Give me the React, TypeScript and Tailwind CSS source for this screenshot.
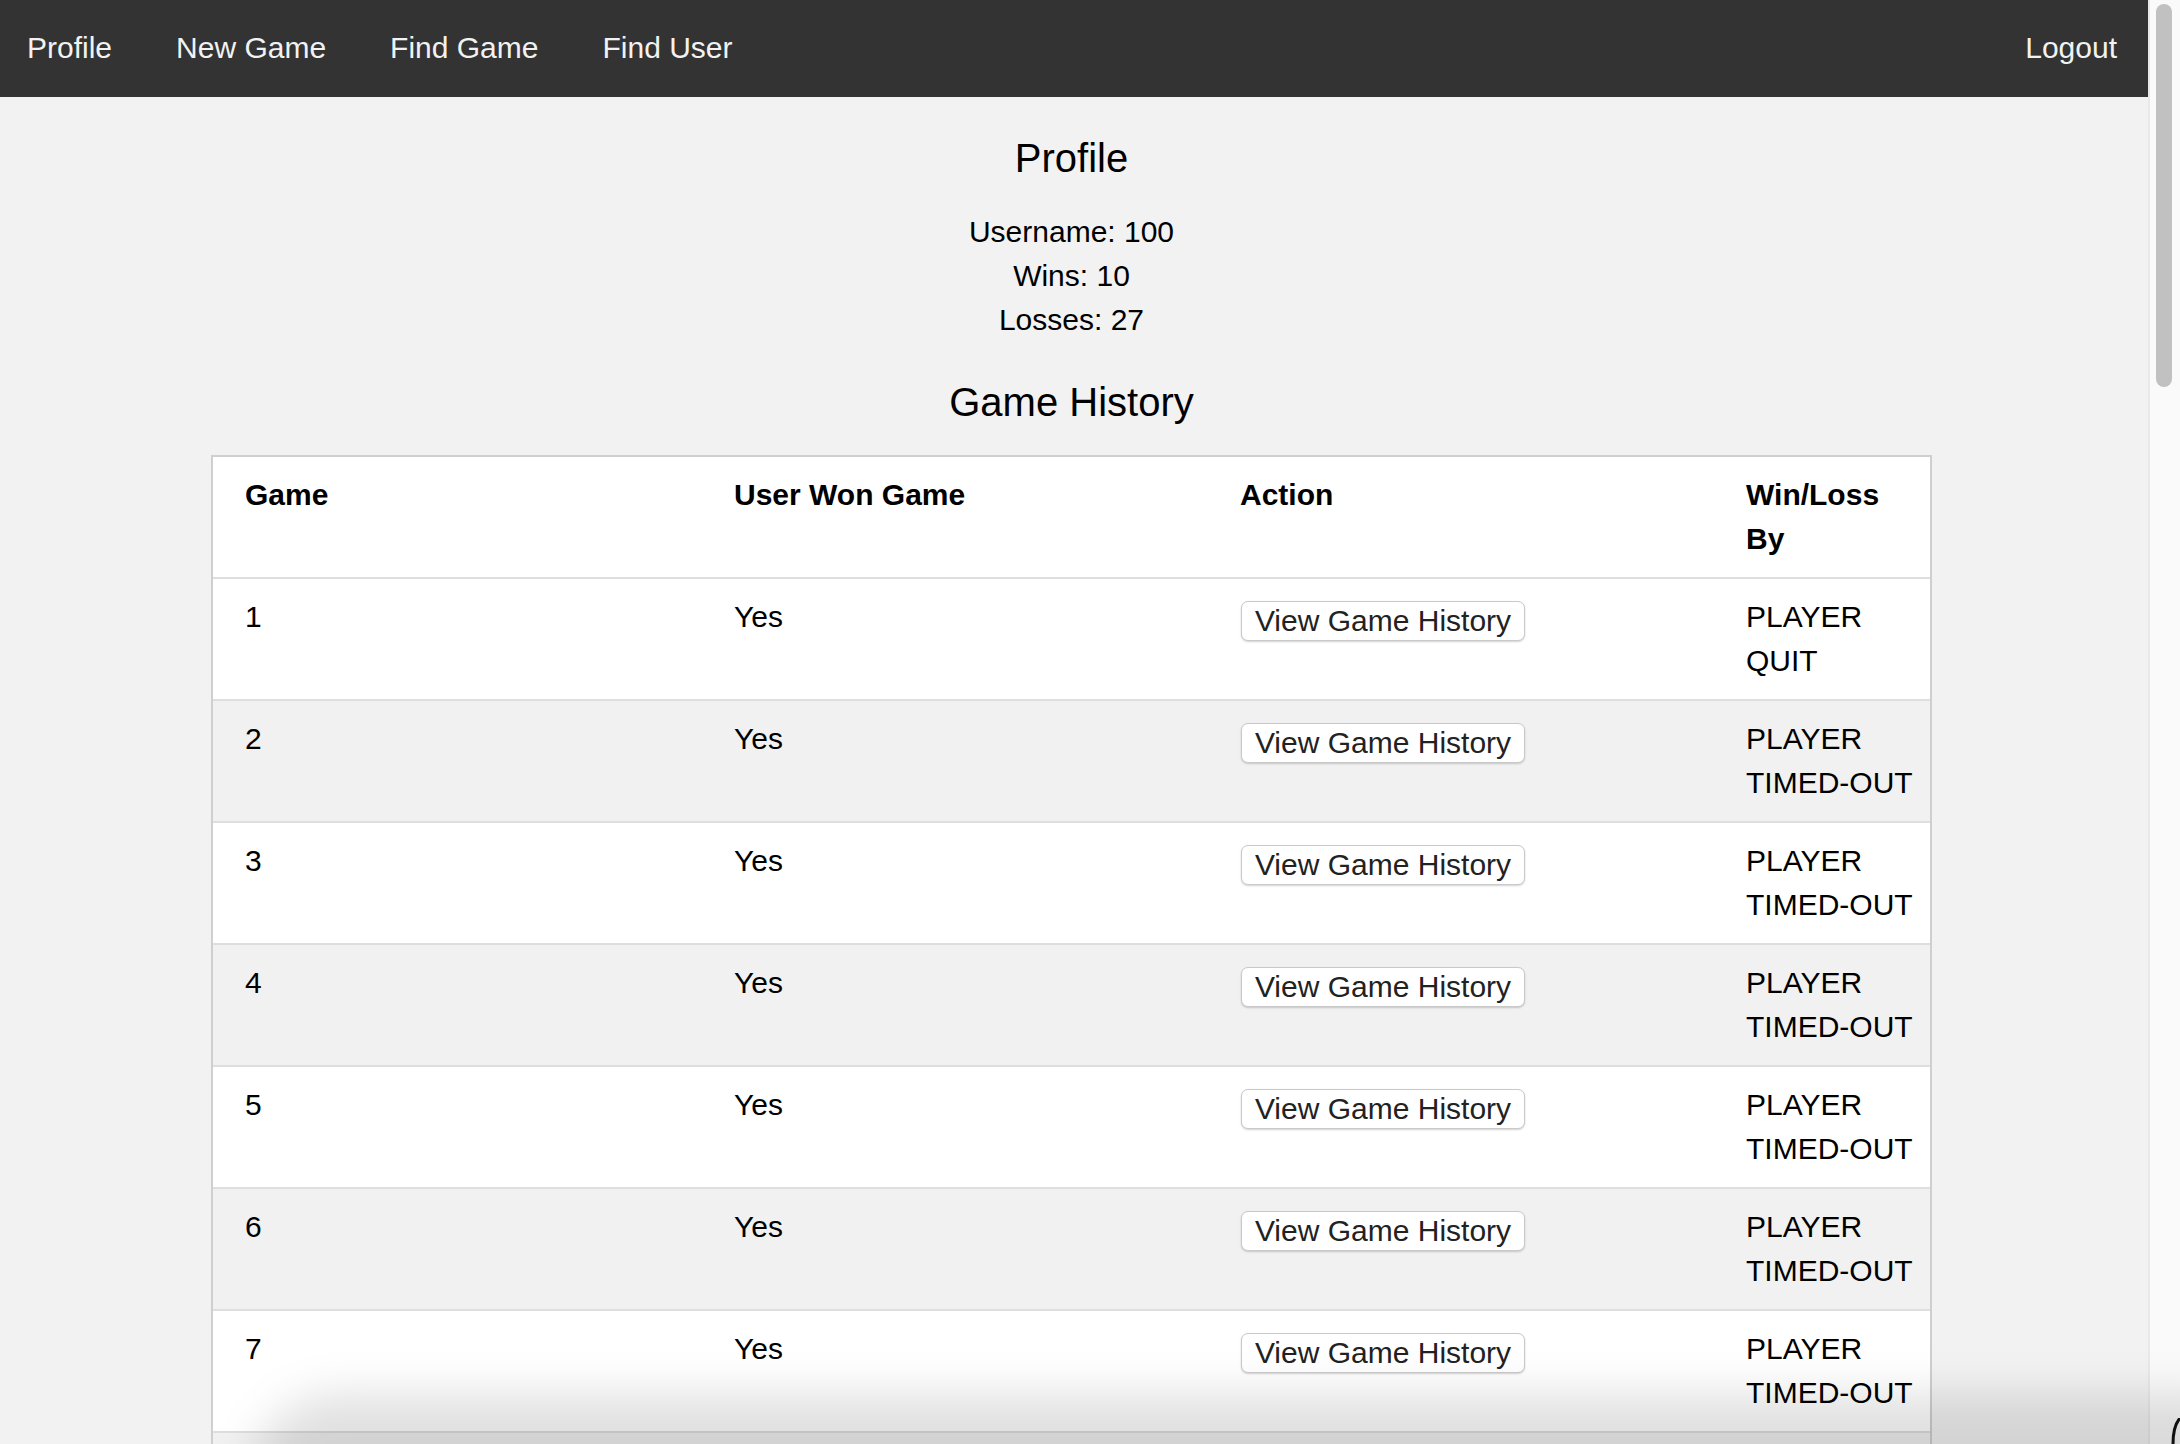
import React from "react";

type Row = { game: number; won: string; by: [string, string] };

const rows: Row[] = [
  { game: 1, won: "Yes", by: ["PLAYER", "QUIT"] },
  { game: 2, won: "Yes", by: ["PLAYER", "TIMED-OUT"] },
  { game: 3, won: "Yes", by: ["PLAYER", "TIMED-OUT"] },
  { game: 4, won: "Yes", by: ["PLAYER", "TIMED-OUT"] },
  { game: 5, won: "Yes", by: ["PLAYER", "TIMED-OUT"] },
  { game: 6, won: "Yes", by: ["PLAYER", "TIMED-OUT"] },
  { game: 7, won: "Yes", by: ["PLAYER", "TIMED-OUT"] },
];

const cell = "pl-[32px] pr-[16px] py-[16px]";

export default function App() {
  return (
    <div className="relative flex h-[1444px] w-[2180px] overflow-hidden font-['Liberation_Sans',Arial,Helvetica,sans-serif]">
      <div className="flex h-full w-[2148px] flex-col bg-[#f2f2f2]">
        <nav className="flex h-[97px] shrink-0 items-center bg-[#333333] pb-[2px] pl-[27px] pr-[31px] text-[30px] text-[#f2f2f2]">
          <div className="flex items-center gap-[64px]">
            <a href="#">Profile</a>
            <a href="#">New Game</a>
            <a href="#">Find Game</a>
            <a href="#">Find User</a>
          </div>
          <a href="#" className="ml-auto">
            Logout
          </a>
        </nav>

        <div className="flex w-[2143px] flex-col items-center text-black">
          <h1 className="mt-[37px] text-[40px] font-normal leading-[48px]">Profile</h1>
          <div className="mt-[28px] text-center text-[30px] leading-[44px]">
            <p>Username: 100</p>
            <p>Wins: 10</p>
            <p>Losses: 27</p>
          </div>
          <h2 className="mt-[36px] text-[40px] font-normal leading-[48px]">Game History</h2>

          <div className="mt-[29px] w-[1721px] border-2 border-[#cfcfcf] bg-white text-[30px] leading-[44px]">
            <div className="grid grid-cols-[489px_506px_506px_216px] bg-white font-bold">
              <div className={cell}>Game</div>
              <div className={cell}>User Won Game</div>
              <div className={cell}>Action</div>
              <div className={cell}>Win/Loss By</div>
            </div>
            {rows.map((r, i) => (
              <div
                key={r.game}
                className={
                  "grid grid-cols-[489px_506px_506px_216px] border-t-2 border-[#dedede] " +
                  (i % 2 === 0 ? "bg-white" : "bg-[#f1f1f1]")
                }
              >
                <div className={cell}>{r.game}</div>
                <div className={cell}>{r.won}</div>
                <div className={cell}>
                  <button className="ml-[1px] mt-[6px] block h-[40px] w-[284px] rounded-[7px] border border-[#c9c9c9] bg-white text-center text-[30px] leading-[34px] text-[#222222] shadow-[0_1px_2px_rgba(0,0,0,0.18)]">
                    View Game History
                  </button>
                </div>
                <div className={cell}>
                  <span>{r.by[0]}</span>{" "}
                  <span className="whitespace-nowrap">{r.by[1]}</span>
                </div>
              </div>
            ))}
            <div className="h-[120px] border-t-2 border-[#dedede] bg-[#f1f1f1]" />
          </div>
        </div>
      </div>

      <div className="h-full w-[32px] border-l-2 border-[#e9e9e9] bg-[#fafafa] pl-[6px] pt-[4px]">
        <div className="h-[383px] w-[16px] rounded-full bg-[#c1c1c1]" />
      </div>

      <div className="pointer-events-none absolute -bottom-[50px] -right-[40px] left-[250px] h-[100px] rounded-tl-[90px] bg-black/[0.12] blur-[22px]" />
      <svg
        className="pointer-events-none absolute bottom-0 right-0 h-[26px] w-[10px]"
        viewBox="0 0 10 26"
      >
        <path d="M10 0 Q 3 8 3 26" fill="none" stroke="#111" strokeWidth="3" />
      </svg>
    </div>
  );
}
